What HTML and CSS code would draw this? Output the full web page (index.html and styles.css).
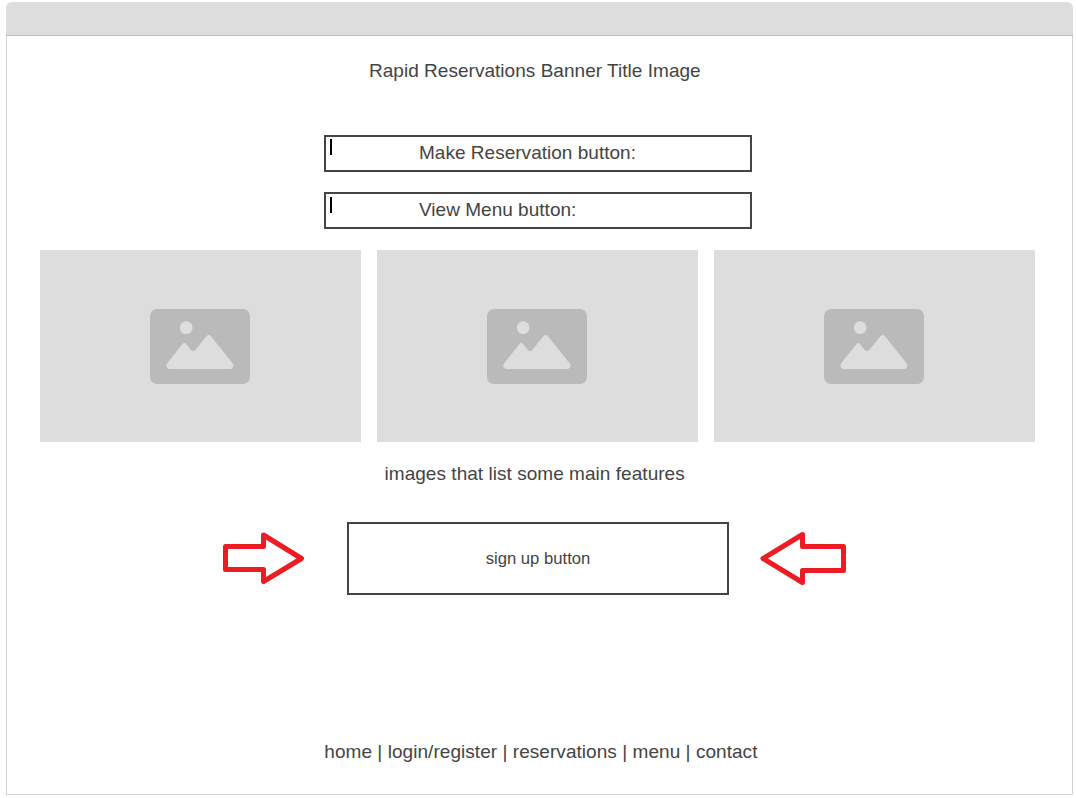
FILE: index.html
```
<!DOCTYPE html>
<html lang="en">
<head>
<meta charset="utf-8">
<title>Rapid Reservations</title>
<link rel="stylesheet" href="styles.css">
</head>
<body>
<svg class="defs" width="0" height="0" aria-hidden="true">
  <symbol id="picture" viewBox="0 0 100 75">
    <rect width="100" height="75" rx="7" fill="#bababa"/>
    <circle cx="36.2" cy="18.7" r="6.4" fill="#dddddd"/>
    <path d="M17.200 54.300 L32.300 35.200 Q34.300 32.800 36.300 35.200 L40.800 41 Q43 43.200 45.300 41 L56.600 27 Q58.700 24.800 60.800 27 L82.600 54.300 Q84.200 56.600 83 58.500 Q82 60 79.800 60 H20 Q17.800 60 16.800 58.500 Q15.600 56.600 17.200 54.300 Z" fill="#dddddd"/>
  </symbol>
</svg>
<div class="window">
  <header class="titlebar"></header>
  <main class="page">
    <h1 class="banner">Rapid Reservations Banner Title Image</h1>
    <div class="actions">
      <div class="action"><i class="caret"></i><span class="label">Make Reservation button:</span></div>
      <div class="action"><i class="caret caret-low"></i><span class="label">View Menu button:</span></div>
    </div>
    <div class="gallery">
      <div class="tile"><svg width="100" height="75"><use href="#picture"/></svg></div>
      <div class="tile"><svg width="100" height="75"><use href="#picture"/></svg></div>
      <div class="tile"><svg width="100" height="75"><use href="#picture"/></svg></div>
    </div>
    <p class="caption">images that list some main features</p>
    <div class="signup">
      <svg class="arrow" width="86" height="56" viewBox="0 0 86 56"><path d="M5.500 17.500 H43.500 V6 L81.500 29.500 L43.500 52.500 V40.500 H5.500 Z"/></svg>
      <div class="signup-button">sign up button</div>
      <svg class="arrow" width="88" height="56" viewBox="0 0 88 56"><path d="M84.500 17.500 H43.500 V5.500 L4 29.500 L43.500 53.500 V41.500 H84.500 Z"/></svg>
    </div>
    <footer class="links">home | login/register | reservations | menu | contact</footer>
  </main>
</div>
</body>
</html>
```
FILE: styles.css
```
* { box-sizing: border-box; }
body {
  margin: 0;
  background: #fff;
  color: #444;
  font: 19px/24px "Liberation Sans", Arial, sans-serif;
}
.defs { display: block; }
.window {
  width: 1067px;
  height: 793px;
  margin: 2px 0 0 6px;
  display: flex;
  flex-direction: column;
}
.titlebar {
  height: 34px;
  background: #ddd;
  border-bottom: 1px solid #bbb;
  border-radius: 6px 6px 0 0;
}
.page {
  flex: 1;
  border: 1px solid #d3d3d3;
  border-top: 0;
  display: flex;
  flex-direction: column;
}
.banner {
  margin: 23px 0 0 362px;
  font-size: 19px;
  font-weight: 400;
  letter-spacing: .03px;
}
.actions {
  width: 428px;
  margin: 52px 0 0 317px;
  display: grid;
  gap: 20px;
}
.action {
  height: 37px;
  border: 2px solid #444;
  display: flex;
  padding: 4px 0 0 4px;
  line-height: 24px;
}
.caret { width: 2px; height: 16px; margin-top: -1px; background: #000; }
.action .caret { margin-top: -2px; }
.action .caret-low { margin-top: -1px; }
.label { margin: 0 0 0 87px; letter-spacing: .02px; }
.gallery {
  display: grid;
  grid-template-columns: repeat(3, 321px);
  gap: 16px;
  margin: 21px 0 0 33px;
}
.tile {
  height: 192px;
  padding-left: 110.4px;
  background: #ddd;
  display: flex;
  align-items: center;
}
.caption { margin: 20px 0 0 377.5px; letter-spacing: .04px; }
.signup {
  display: flex;
  align-items: flex-start;
  margin: 36px 0 0 213px;
}
.arrow {
  margin-top: 7px;
  fill: none;
  stroke: #ed1c24;
  stroke-width: 5;
  stroke-linejoin: round;
}
.signup-button {
  width: 382px;
  height: 73px;
  margin: 0 30px 0 41px;
  border: 2px solid #444;
  font-size: 16.67px;
  line-height: 69px;
  text-align: center;
}
.links { margin: auto 0 30px 317.3px; letter-spacing: .05px; }
```
